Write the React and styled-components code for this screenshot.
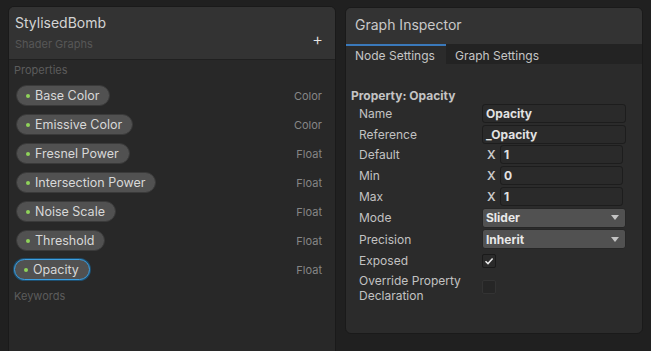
import styled, { createGlobalStyle } from "styled-components"

const Global = createGlobalStyle`
html, body {
    margin: 0;
    padding: 0;
    background: #202020;
    font-family: Inter, "Noto Sans", sans-serif;
    overflow: hidden;
}
`

const Page = styled.div`
display: flex;
flex-direction: row;
align-items: flex-start;
gap: 9px;
padding: 6px 8px 0 8px;
height: 351px;
box-sizing: border-box;
`

const Blackboard = styled.div`
width: 328px;
height: 360px;
background-color: #282828;
border-radius: 6px 6px 0 0;
border: 1px solid #1a1a1a;
box-sizing: border-box;
display: flex;
flex-direction: column;
`

const BoardHeader = styled.div`
height: 53px;
background-color: #333333;
border-radius: 5px 5px 0 0;
border-bottom: 1px solid #202020;
box-sizing: border-box;
padding: 7px 14px 0 6px;
position: relative;
h1 {
    margin: 0;
    font-size: 14px;
    font-weight: 400;
    color: #d4d4d4;
    line-height: 18px;
}
p {
    margin: 5px 0 0 0;
    font-size: 11px;
    color: #575757;
    line-height: 14px;
}
`

const AddButton = styled.span`
position: absolute;
right: 12px;
top: 24px;
color: #e6e6e6;
font-size: 17px;
line-height: 17px;
font-weight: 300;
`

const SectionTitle = styled.div`
font-size: 11px;
color: #5c5c5c;
padding: ${p => p.$top || 3}px 0 0 5px;
line-height: 14px;
`

const PropertyList = styled.div`
display: flex;
flex-direction: column;
gap: 8px;
padding: 8px 13px 0 7px;
`

const PropertyRow = styled.div`
display: flex;
justify-content: space-between;
align-items: center;
height: 21px;
`

const Pill = styled.div`
display: flex;
align-items: center;
gap: 5px;
height: 21px;
box-sizing: border-box;
padding: 0 10px 0 9px;
border-radius: 11px;
background-color: #515151;
border: 1px solid ${p => p.$selected ? "#3d9fe0" : "#3a3a3a"};
box-shadow: ${p => p.$selected ? "0 0 0 1px #1d4f70" : "none"};
margin-left: ${p => p.$selected ? "-2px" : "0"};
font-size: 12.5px;
color: #d8d8d8;
`

const Dot = styled.span`
width: 4px;
height: 4px;
border-radius: 50%;
background-color: #8fd35a;
`

const TypeLabel = styled.span`
font-size: 11px;
color: #868686;
`

const Inspector = styled.div`
width: 298px;
height: 327px;
background-color: #2b2b2b;
border-radius: 6px;
border: 1px solid #1a1a1a;
box-sizing: border-box;
display: flex;
flex-direction: column;
overflow: hidden;
margin-top: 1px;
`

const InspectorHeader = styled.div`
height: 36px;
background-color: #333333;
box-sizing: border-box;
padding: 8px 0 0 9px;
font-size: 14px;
color: #c9c9c9;
line-height: 18px;
`

const TabBar = styled.div`
display: flex;
height: 20px;
background-color: #232323;
`

const Tab = styled.div`
width: ${p => p.$width}px;
box-sizing: border-box;
padding: 2px 0 0 9px;
font-size: 12px;
line-height: 15px;
color: #c6c6c6;
background-color: ${p => p.$active ? "#2b2b2b" : "transparent"};
border-top: 2px solid ${p => p.$active ? "#3a79bb" : "transparent"};
`

const Settings = styled.div`
padding: 24px 16px 0 5px;
display: flex;
flex-direction: column;
`

const PropertyTitle = styled.div`
font-size: 12px;
font-weight: 700;
color: #c4c4c4;
line-height: 15px;
margin-bottom: 0;
`

const FieldRow = styled.div`
display: flex;
align-items: ${p => p.$top ? "flex-start" : "center"};
min-height: ${p => p.$h || 21}px;
padding-left: 8px;
padding-top: ${p => p.$pt || 0}px;
`

const FieldLabel = styled.div`
width: 123px;
flex-shrink: 0;
font-size: 12px;
line-height: 15px;
color: #c2c2c2;
`

const TextField = styled.div`
flex: 1;
height: 19px;
box-sizing: border-box;
background-color: #2a2a2a;
border: 1px solid #1d1d1d;
border-radius: 3px;
padding: 0 0 0 3px;
display: flex;
align-items: center;
font-size: 12px;
font-weight: 700;
color: #e2e2e2;
margin-right: ${p => p.$inset || 0}px;
`

const AxisLabel = styled.span`
width: 18px;
padding-left: 5px;
box-sizing: border-box;
font-size: 12px;
font-weight: 600;
color: #c8c8c8;
`

const Dropdown = styled.div`
flex: 1;
height: 20px;
box-sizing: border-box;
background-color: #515151;
border: 1px solid #262626;
border-radius: 3px;
padding: 0 6px 0 3px;
display: flex;
align-items: center;
justify-content: space-between;
font-size: 12px;
font-weight: 700;
color: #e8e8e8;
`

const Caret = styled.span`
width: 0;
height: 0;
border-left: 4px solid transparent;
border-right: 4px solid transparent;
border-top: 5px solid #c4c4c4;
`

const Checkbox = styled.div`
width: 14px;
height: 14px;
box-sizing: border-box;
border-radius: 2px;
background-color: ${p => p.$checked ? "#2a2a2a" : "#262626"};
border: 1px solid ${p => p.$checked ? "#1a1a1a" : "#333333"};
display: flex;
align-items: center;
justify-content: center;
margin-top: ${p => p.$mt || 0}px;
`

const properties = [
    { name: "Base Color", type: "Color" },
    { name: "Emissive Color", type: "Color" },
    { name: "Fresnel Power", type: "Float" },
    { name: "Intersection Power", type: "Float" },
    { name: "Noise Scale", type: "Float" },
    { name: "Threshold", type: "Float" },
    { name: "Opacity", type: "Float", selected: true },
]

function Check() {
    return (
        <svg width="10" height="10" viewBox="0 0 10 10">
            <path d="M1.5 5.2 L4 7.6 L8.6 2.4" fill="none" stroke="#e8e8e8" strokeWidth="1.5" />
        </svg>
    )
}

export default function App() {
    return (
        <>
            <Global />
            <Page>
                <Blackboard>
                    <BoardHeader>
                        <h1>StylisedBomb</h1>
                        <p>Shader Graphs</p>
                        <AddButton>+</AddButton>
                    </BoardHeader>
                    <SectionTitle>Properties</SectionTitle>
                    <PropertyList>
                        {properties.map(p => (
                            <PropertyRow key={p.name}>
                                <Pill $selected={p.selected}><Dot />{p.name}</Pill>
                                <TypeLabel>{p.type}</TypeLabel>
                            </PropertyRow>
                        ))}
                    </PropertyList>
                    <SectionTitle $top={9}>Keywords</SectionTitle>
                </Blackboard>
                <Inspector>
                    <InspectorHeader>Graph Inspector</InspectorHeader>
                    <TabBar>
                        <Tab $active $width={100}>Node Settings</Tab>
                        <Tab $width={120}>Graph Settings</Tab>
                    </TabBar>
                    <Settings>
                        <PropertyTitle>Property: Opacity</PropertyTitle>
                        <FieldRow><FieldLabel>Name</FieldLabel><TextField>Opacity</TextField></FieldRow>
                        <FieldRow $h={20}><FieldLabel>Reference</FieldLabel><TextField>_Opacity</TextField></FieldRow>
                        <FieldRow><FieldLabel>Default</FieldLabel><AxisLabel>X</AxisLabel><TextField $inset={3}>1</TextField></FieldRow>
                        <FieldRow><FieldLabel>Min</FieldLabel><AxisLabel>X</AxisLabel><TextField $inset={3}>0</TextField></FieldRow>
                        <FieldRow><FieldLabel>Max</FieldLabel><AxisLabel>X</AxisLabel><TextField $inset={3}>1</TextField></FieldRow>
                        <FieldRow><FieldLabel>Mode</FieldLabel><Dropdown>Slider<Caret /></Dropdown></FieldRow>
                        <FieldRow $h={22}><FieldLabel>Precision</FieldLabel><Dropdown>Inherit<Caret /></Dropdown></FieldRow>
                        <FieldRow><FieldLabel>Exposed</FieldLabel><Checkbox $checked><Check /></Checkbox></FieldRow>
                        <FieldRow $top $pt={2}><FieldLabel>Override Property<br />Declaration</FieldLabel><Checkbox $mt={7} /></FieldRow>
                    </Settings>
                </Inspector>
            </Page>
        </>
    )
}
